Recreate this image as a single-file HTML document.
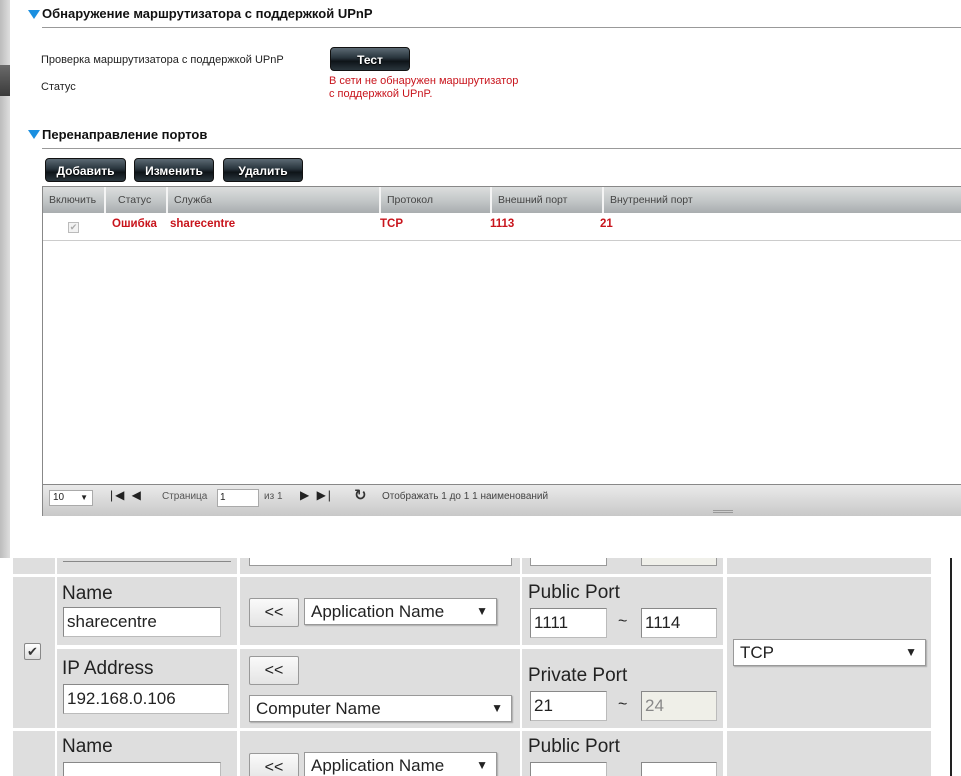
<!DOCTYPE html>
<html><head><meta charset="utf-8"><style>
*{margin:0;padding:0;box-sizing:border-box}
html,body{width:961px;height:776px;overflow:hidden}
body{position:relative;background:#fff;font-family:"Liberation Sans","DejaVu Sans",sans-serif;font-size:11px;color:#222}
.a{position:absolute}
.tri{width:0;height:0;border-left:6px solid transparent;border-right:6px solid transparent;border-top:9px solid #1a8fe0}
.h{font-weight:bold;font-size:13px;color:#111}
.btn{position:absolute;height:24px;border-radius:4px;background:linear-gradient(#5c6a74,#28343c 45%,#0e1418 60%,#2a353c);color:#fff;font-weight:bold;font-size:12px;text-align:center;line-height:24px;text-shadow:0 1px 1px #000;border:1px solid #111}
.th{position:absolute;top:0;height:26px;line-height:26px;padding-left:6px;color:#444;font-size:10.5px;border-right:2px solid #f4f4f4}
.red{color:#c8141c;font-weight:bold;font-size:11.5px}
.cell{position:absolute;background:#dedede}
.lbl{position:absolute;font-family:"Liberation Sans","DejaVu Sans",sans-serif;font-size:19px;color:#222}
.inp{position:absolute;background:#fff;border:1px solid #888;border-right-color:#bbb;border-bottom-color:#bbb;font-family:"Liberation Sans",sans-serif;font-size:17px;padding-left:3px;line-height:28px;height:30px;color:#222}
.sel{position:absolute;background:#fff;border:1px solid #999;font-family:"Liberation Sans",sans-serif;font-size:17px;padding-left:6px;line-height:25px;height:27px;color:#222;box-shadow:1px 1px 1px #aaa}
.sel b{position:absolute;right:8px;top:0;font-size:12px}
.ll{position:absolute;width:50px;height:29px;border:1px solid #999;background:linear-gradient(#fafafa,#e4e4e4);font-family:"Liberation Sans",sans-serif;font-size:16px;text-align:center;line-height:27px;border-radius:2px}
</style></head><body>
<div class="a" style="left:0;top:0;width:10px;height:558px;background:linear-gradient(90deg,#bcbcbc,#dedede)"></div>
<div class="a" style="left:0;top:65px;width:10px;height:31px;background:linear-gradient(#6a6a6a,#3a3a3a)"></div>

<div class="a tri" style="left:28px;top:10px"></div>
<div class="a h" style="left:42px;top:6px">Обнаружение маршрутизатора с поддержкой UPnP</div>
<div class="a" style="left:42px;top:27px;width:919px;height:1px;background:#999"></div>
<div class="a" style="left:41px;top:54px">Проверка маршрутизатора с поддержкой UPnP</div>
<div class="a" style="left:41px;top:81px">Статус</div>
<div class="btn" style="left:330px;top:47px;width:80px;height:24px">Тест</div>
<div class="a" style="left:329px;top:75px;color:#c8141c;line-height:13px">В сети не обнаружен маршрутизатор<br>с поддержкой UPnP.</div>

<div class="a tri" style="left:28px;top:130px"></div>
<div class="a h" style="left:42px;top:127px">Перенаправление портов</div>
<div class="a" style="left:42px;top:148px;width:919px;height:1px;background:#999"></div>
<div class="btn" style="left:45px;top:158px;width:81px">Добавить</div>
<div class="btn" style="left:134px;top:158px;width:80px">Изменить</div>
<div class="btn" style="left:223px;top:158px;width:80px">Удалить</div>

<div class="a" style="left:42px;top:186px;width:919px;height:330px;border:1px solid #888;border-right:none;background:#fff">
 <div class="a" style="left:0;top:0;width:918px;height:26px;background:linear-gradient(#dcdede,#c4c8c9 50%,#a9adaf)">
  <div class="th" style="left:0;width:63px">Включить</div>
  <div class="th" style="left:63px;width:62px;padding-left:12px">Статус</div>
  <div class="th" style="left:125px;width:213px">Служба</div>
  <div class="th" style="left:338px;width:111px">Протокол</div>
  <div class="th" style="left:449px;width:112px">Внешний порт</div>
  <div class="th" style="left:561px;width:357px;border:none">Внутренний порт</div>
 </div>
 <div class="a" style="left:25px;top:35px;width:11px;height:11px;border:1px solid #bbb;background:#f2f2f2;color:#aaa;font-size:9px;line-height:9px;text-align:center">✔</div>
 <div class="a red" style="left:69px;top:31px">Ошибка</div>
 <div class="a red" style="left:127px;top:31px">sharecentre</div>
 <div class="a red" style="left:337px;top:31px">TCP</div>
 <div class="a red" style="left:447px;top:31px">1113</div>
 <div class="a red" style="left:557px;top:31px">21</div>
 <div class="a" style="left:0;top:53px;width:918px;height:1px;background:#ccc"></div>
 <div class="a" style="left:0;top:297px;width:918px;height:32px;border-top:1px solid #888;background:linear-gradient(#eaeaea,#d6d6d6 60%,#c8c8c8)">
  <div class="a" style="left:6px;top:5px;width:44px;height:16px;background:#fff;border:1px solid #aaa;font-size:10px;line-height:14px;padding-left:3px">10<span style="position:absolute;right:4px;font-size:8px">▼</span></div>
  <div class="a" style="left:67px;top:3px;font-size:12px;color:#222;letter-spacing:2px">|◀ ◀</div>
  <div class="a" style="left:119px;top:6px;color:#555;font-size:10px">Страница</div>
  <div class="a" style="left:174px;top:4px;width:42px;height:18px;background:#fff;border:1px solid #aaa;font-size:10px;line-height:16px;padding-left:2px">1</div>
  <div class="a" style="left:221px;top:6px;color:#555;font-size:10px">из 1</div>
  <div class="a" style="left:257px;top:3px;font-size:12px;color:#222;letter-spacing:2px">▶ ▶|</div>
  <div class="a" style="left:311px;top:1px;font-size:15px;font-weight:bold;color:#333">↻</div>
  <div class="a" style="left:339px;top:6px;color:#444;font-size:10px">Отображать 1 до 1 1 наименований</div>
  <div class="a" style="left:670px;top:25px;width:20px;height:3px;border-top:1px solid #999;border-bottom:1px solid #999"></div>
 </div>
</div>

<div class="a" style="left:0;top:558px;width:961px;height:218px;background:#fff;overflow:hidden">
 <div class="a" style="left:950px;top:0;width:2px;height:218px;background:#222"></div>
 <div class="cell" style="left:13px;top:0;width:42px;height:16px"></div>
 <div class="cell" style="left:57px;top:0;width:180px;height:16px"></div>
 <div class="a" style="left:63px;top:0;width:168px;height:4px;border-bottom:1px solid #888"></div>
 <div class="cell" style="left:240px;top:0;width:280px;height:16px"></div>
 <div class="a" style="left:249px;top:0;width:263px;height:8px;background:#fff;border:1px solid #999;border-top:none"></div>
 <div class="cell" style="left:522px;top:0;width:201px;height:16px"></div>
 <div class="a" style="left:530px;top:0;width:77px;height:8px;background:#fff;border:1px solid #999;border-top:none"></div>
 <div class="a" style="left:641px;top:0;width:76px;height:8px;background:#f0f0ea;border:1px solid #999;border-top:none"></div>
 <div class="cell" style="left:727px;top:0;width:204px;height:16px"></div>

 <div class="cell" style="left:13px;top:19px;width:42px;height:151px"></div>
 <div class="a" style="left:24px;top:85px;width:17px;height:17px;border:1px solid #888;background:linear-gradient(#fff,#ddd);border-radius:2px;font-size:13px;text-align:center;line-height:15px;color:#333">✔</div>
 <div class="cell" style="left:57px;top:19px;width:180px;height:68px"></div>
 <div class="cell" style="left:57px;top:91px;width:180px;height:79px"></div>
 <div class="cell" style="left:240px;top:19px;width:280px;height:68px"></div>
 <div class="cell" style="left:240px;top:91px;width:280px;height:79px"></div>
 <div class="cell" style="left:522px;top:19px;width:201px;height:68px"></div>
 <div class="cell" style="left:522px;top:91px;width:201px;height:79px"></div>
 <div class="cell" style="left:727px;top:19px;width:204px;height:151px"></div>

 <div class="lbl" style="left:62px;top:25px">Name</div>
 <div class="inp" style="left:63px;top:49px;width:158px">sharecentre</div>
 <div class="ll" style="left:249px;top:40px">&lt;&lt;</div>
 <div class="sel" style="left:304px;top:40px;width:193px">Application Name<b>▼</b></div>
 <div class="lbl" style="left:528px;top:24px">Public Port</div>
 <div class="inp" style="left:530px;top:50px;width:77px">1111</div>
 <div class="a" style="left:618px;top:55px;font-size:16px">~</div>
 <div class="inp" style="left:641px;top:50px;width:76px">1114</div>
 <div class="sel" style="left:733px;top:81px;width:193px">TCP<b>▼</b></div>

 <div class="lbl" style="left:62px;top:100px">IP Address</div>
 <div class="inp" style="left:63px;top:126px;width:166px">192.168.0.106</div>
 <div class="ll" style="left:249px;top:98px">&lt;&lt;</div>
 <div class="sel" style="left:249px;top:137px;width:263px">Computer Name<b>▼</b></div>
 <div class="lbl" style="left:528px;top:107px">Private Port</div>
 <div class="inp" style="left:530px;top:133px;width:77px">21</div>
 <div class="a" style="left:618px;top:138px;font-size:16px">~</div>
 <div class="inp" style="left:641px;top:133px;width:76px;background:#efefe8;color:#888">24</div>

 <div class="cell" style="left:13px;top:173px;width:42px;height:45px"></div>
 <div class="cell" style="left:57px;top:173px;width:180px;height:45px"></div>
 <div class="cell" style="left:240px;top:173px;width:280px;height:45px"></div>
 <div class="cell" style="left:522px;top:173px;width:201px;height:45px"></div>
 <div class="cell" style="left:727px;top:173px;width:204px;height:45px"></div>
 <div class="lbl" style="left:62px;top:178px">Name</div>
 <div class="inp" style="left:63px;top:204px;width:158px"></div>
 <div class="ll" style="left:249px;top:195px">&lt;&lt;</div>
 <div class="sel" style="left:304px;top:194px;width:193px">Application Name<b>▼</b></div>
 <div class="lbl" style="left:528px;top:178px">Public Port</div>
 <div class="inp" style="left:530px;top:204px;width:77px"></div>
 <div class="inp" style="left:641px;top:204px;width:76px"></div>
</div>
</body></html>
